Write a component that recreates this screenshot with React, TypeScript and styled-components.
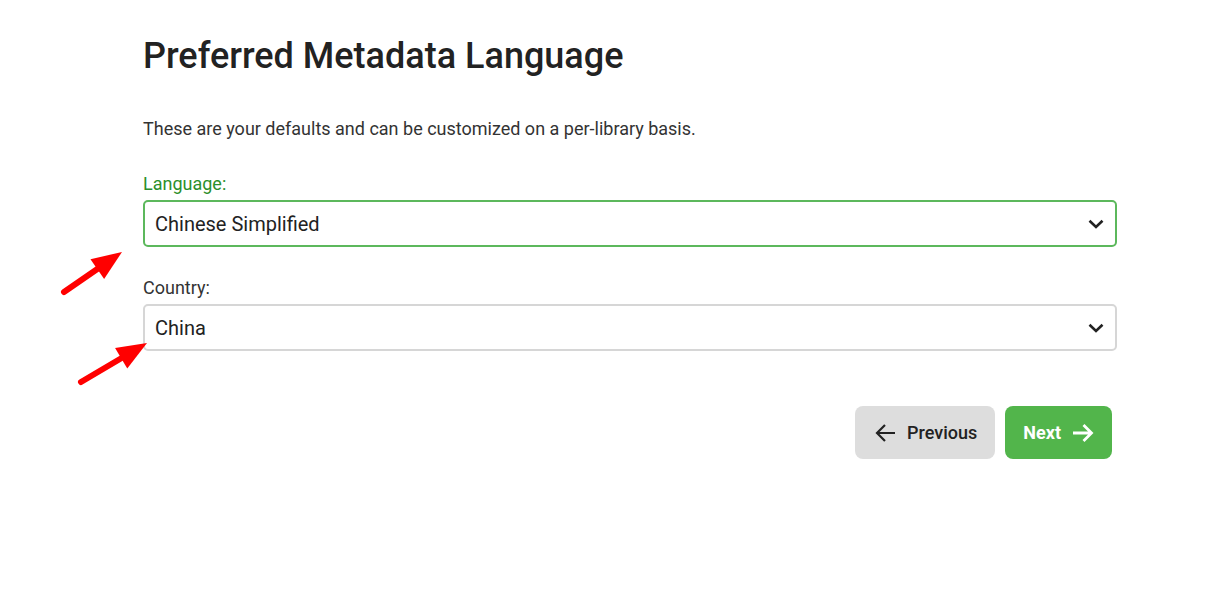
import React from 'react';
import styled, { createGlobalStyle } from 'styled-components';

const GlobalStyle = createGlobalStyle`
  html, body {
    margin: 0;
    padding: 0;
    background: #fff;
  }
  body {
    font-family: Roboto, "Noto Sans", "Liberation Sans", sans-serif;
    color: #222;
  }
`;

const Page = styled.div`
  position: relative;
  width: 1206px;
  height: 598px;
  overflow: hidden;
  box-sizing: border-box;
  padding: 32px 89px 0 143px;
`;

const Title = styled.h1`
  margin: 0;
  font-size: 36px;
  font-weight: 500;
  line-height: 48px;
  color: #222;
`;

const Intro = styled.p`
  margin: 37px 0 0;
  font-size: 18px;
  line-height: 24px;
  color: #333;
`;

const Field = styled.div`
  margin-top: 31px;
  & + & {
    margin-top: 29px;
  }
`;

const Label = styled.label<{ $active?: boolean }>`
  display: block;
  font-size: 18px;
  line-height: 24px;
  color: ${p => (p.$active ? '#2b8f2b' : '#333')};
  margin-bottom: 4px;
`;

const SelectBox = styled.div<{ $active?: boolean }>`
  display: flex;
  align-items: center;
  justify-content: space-between;
  height: 47px;
  box-sizing: border-box;
  padding: 0 11px 0 10px;
  border: 2px solid ${p => (p.$active ? '#5cb85c' : '#d6d6d6')};
  border-radius: 5px;
  background: #fff;
  font-size: 20px;
  color: #222;
`;

const Actions = styled.div`
  display: flex;
  justify-content: flex-end;
  gap: 10px;
  margin-top: 55px;
  padding-right: 5px;
`;

const Button = styled.button<{ $primary?: boolean }>`
  display: inline-flex;
  align-items: center;
  gap: 11px;
  height: 53px;
  border: none;
  border-radius: 8px;
  padding: ${p => (p.$primary ? '0 18px 0 18px' : '0 18px 0 20px')};
  background: ${p => (p.$primary ? '#52b54b' : '#dddddd')};
  color: ${p => (p.$primary ? '#fff' : '#222')};
  font-family: Roboto, "Noto Sans", "Liberation Sans", sans-serif;
  font-size: 18px;
  font-weight: ${p => (p.$primary ? 700 : 500)};
  cursor: pointer;
`;

const Annotation = styled.svg`
  position: absolute;
  left: 0;
  top: 0;
  pointer-events: none;
`;

const Chevron = () => (
  <svg width="16" height="10" viewBox="0 0 16 10">
    <path d="M1.5 1.8 L8 8 L14.5 1.8" fill="none" stroke="#222" strokeWidth="2.6" />
  </svg>
);

const ArrowLeft = () => (
  <svg width="21" height="20" viewBox="0 0 21 20">
    <path d="M20 10 H2 M10 2 L2 10 L10 18" fill="none" stroke="#222" strokeWidth="2.2" />
  </svg>
);

const ArrowRight = () => (
  <svg width="22" height="20" viewBox="0 0 22 20">
    <path d="M1 10 H19.5 M11.5 2 L19.5 10 L11.5 18" fill="none" stroke="#fff" strokeWidth="2.8" />
  </svg>
);

function RedArrow({ x1, y1, x2, y2 }: { x1: number; y1: number; x2: number; y2: number }) {
  const dx = x2 - x1;
  const dy = y2 - y1;
  const len = Math.hypot(dx, dy);
  const ux = dx / len;
  const uy = dy / len;
  const head = 30;
  const half = 12;
  const bx = x2 - ux * head;
  const by = y2 - uy * head;
  const px = -uy * half;
  const py = ux * half;
  return (
    <g>
      <line x1={x1} y1={y1} x2={bx + ux * 4} y2={by + uy * 4} stroke="#f00" strokeWidth="6" strokeLinecap="round" />
      <polygon points={`${x2},${y2} ${bx + px},${by + py} ${bx - px},${by - py}`} fill="#f00" />
    </g>
  );
}

export default function App() {
  return (
    <>
      <GlobalStyle />
      <Page>
        <Title>Preferred Metadata Language</Title>
        <Intro>These are your defaults and can be customized on a per-library basis.</Intro>
        <Field>
          <Label $active>Language:</Label>
          <SelectBox $active>
            <span>Chinese Simplified</span>
            <Chevron />
          </SelectBox>
        </Field>
        <Field>
          <Label>Country:</Label>
          <SelectBox>
            <span>China</span>
            <Chevron />
          </SelectBox>
        </Field>
        <Actions>
          <Button>
            <ArrowLeft />
            Previous
          </Button>
          <Button $primary>
            Next
            <ArrowRight />
          </Button>
        </Actions>
        <Annotation width="1206" height="598">
          <RedArrow x1={64} y1={292} x2={122} y2={252} />
          <RedArrow x1={81} y1={382} x2={147} y2={343} />
        </Annotation>
      </Page>
    </>
  );
}
